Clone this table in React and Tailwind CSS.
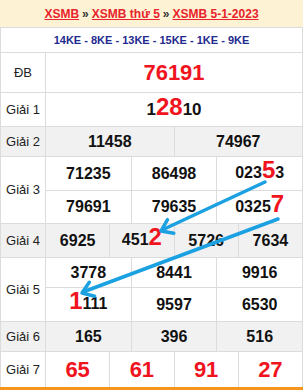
const RED = "text-[#f0141e]";

const Cell = ({ children, last, className = "" }) => (
  <div
    className={`flex flex-1 items-center justify-center ${last ? "" : "border-r border-[#dcdcdc]"} ${className}`}
  >
    {children}
  </div>
);

const Num = ({ children }) => (
  <span className="text-[16px] font-bold leading-none text-[#111]">{children}</span>
);

const Big = ({ children, size = "text-[24px]", lift }) => (
  <span className={`${size} font-bold leading-none ${RED} ${lift ? "-mt-[8px]" : ""}`}>{children}</span>
);

const Mixed = ({ children }) => <span className="flex items-baseline leading-none">{children}</span>;

const Row = ({ label, height, gray, children }) => (
  <div className={`flex border-b border-[#dcdcdc] ${gray ? "bg-[#f1f1f1]" : "bg-white"} ${height}`}>
    <div className="flex w-[45px] shrink-0 items-center justify-center border-r border-[#dcdcdc] text-[13px] text-[#222]">
      {label}
    </div>
    <div className="flex flex-1 flex-col">{children}</div>
  </div>
);

const SubRow = ({ height, items, border }) => (
  <div className={`flex ${height} ${border ? "border-b border-[#dcdcdc]" : ""}`}>
    {items.map((it, i) => (
      <Cell key={i} last={i === items.length - 1}>
        {it}
      </Cell>
    ))}
  </div>
);

const Arrows = () => (
  <svg className="pointer-events-none absolute left-0 top-0" width="306" height="391">
    <g stroke="#1ba1e2" strokeWidth="3.5" strokeLinecap="round" strokeLinejoin="round" fill="none">
      <line x1="265" y1="182" x2="162" y2="230" />
      <polyline points="167.5,219.7 161,231 173.8,233.2" />
      <line x1="278" y1="219" x2="83" y2="292" />
      <polyline points="89.3,282.3 82,293 94.6,296.2" />
    </g>
  </svg>
);

export default function App() {
  return (
    <div className="relative h-[391px] w-[306px] bg-white font-['Liberation_Sans',Arial,sans-serif]">
      <div className="w-[303px] border-b-[3px] border-[#f7941d]">
        <div className="flex h-[28px] items-center justify-center border-b border-[#dcdcdc] bg-[#fdf2d3] text-[12px] font-bold">
          <a className="text-[#e8232b] underline">XSMB</a>
          <span className="mx-[3px] text-[#333]">»</span>
          <a className="text-[#e8232b] underline">XSMB thứ 5</a>
          <span className="mx-[3px] text-[#333]">»</span>
          <a className="text-[#e8232b] underline">XSMB 5-1-2023</a>
        </div>
        <div className="border-l border-r border-[#dcdcdc]">
          <div className="flex h-[25px] items-center justify-center border-b border-[#dcdcdc] text-[11px] font-bold text-[#1f2a8f]">
            14KE - 8KE - 13KE - 15KE - 1KE - 9KE
          </div>

          <Row label="ĐB" height="h-[40px]">
            <SubRow height="h-full" items={[<Big size="text-[22px]">76191</Big>]} />
          </Row>

          <Row label="Giải 1" height="h-[34px]">
            <SubRow
              height="h-full"
              items={[
                <span className="flex items-baseline font-bold leading-none text-[#111]">
                  <span className="text-[17px]">1</span>
                  <Big lift>28</Big>
                  <span className="text-[17px]">10</span>
                </span>,
              ]}
            />
          </Row>

          <Row label="Giải 2" height="h-[30px]" gray>
            <SubRow height="h-full" items={[<Num>11458</Num>, <Num>74967</Num>]} />
          </Row>

          <Row label="Giải 3" height="h-[67px]">
            <SubRow
              height="h-[34px]"
              border
              items={[<Num>71235</Num>, <Num>86498</Num>, <Mixed><Num>023</Num><Big lift>5</Big><Num>3</Num></Mixed>]}
            />
            <SubRow
              height="flex-1"
              items={[<Num>79691</Num>, <Num>79635</Num>, <Mixed><Num>0325</Num><Big lift>7</Big></Mixed>]}
            />
          </Row>

          <Row label="Giải 4" height="h-[34px]" gray>
            <SubRow
              height="h-full"
              items={[<Num>6925</Num>, <Mixed><Num>451</Num><Big lift>2</Big></Mixed>, <Num>5726</Num>, <Num>7634</Num>]}
            />
          </Row>

          <Row label="Giải 5" height="h-[64px]">
            <SubRow height="h-[30px]" border items={[<Num>3778</Num>, <Num>8441</Num>, <Num>9916</Num>]} />
            <SubRow
              height="flex-1"
              items={[<Mixed><Big lift>1</Big><Num>111</Num></Mixed>, <Num>9597</Num>, <Num>6530</Num>]}
            />
          </Row>

          <Row label="Giải 6" height="h-[30px]" gray>
            <SubRow height="h-full" items={[<Num>165</Num>, <Num>396</Num>, <Num>516</Num>]} />
          </Row>

          <div className="flex h-[35px] bg-white">
            <div className="flex w-[45px] shrink-0 items-center justify-center border-r border-[#dcdcdc] text-[13px] text-[#222]">
              Giải 7
            </div>
            <SubRow
              height="h-full flex-1"
              items={[
                <Big size="text-[22px]">65</Big>,
                <Big size="text-[22px]">61</Big>,
                <Big size="text-[22px]">91</Big>,
                <Big size="text-[22px]">27</Big>,
              ]}
            />
          </div>
        </div>
      </div>
      <Arrows />
    </div>
  );
}
